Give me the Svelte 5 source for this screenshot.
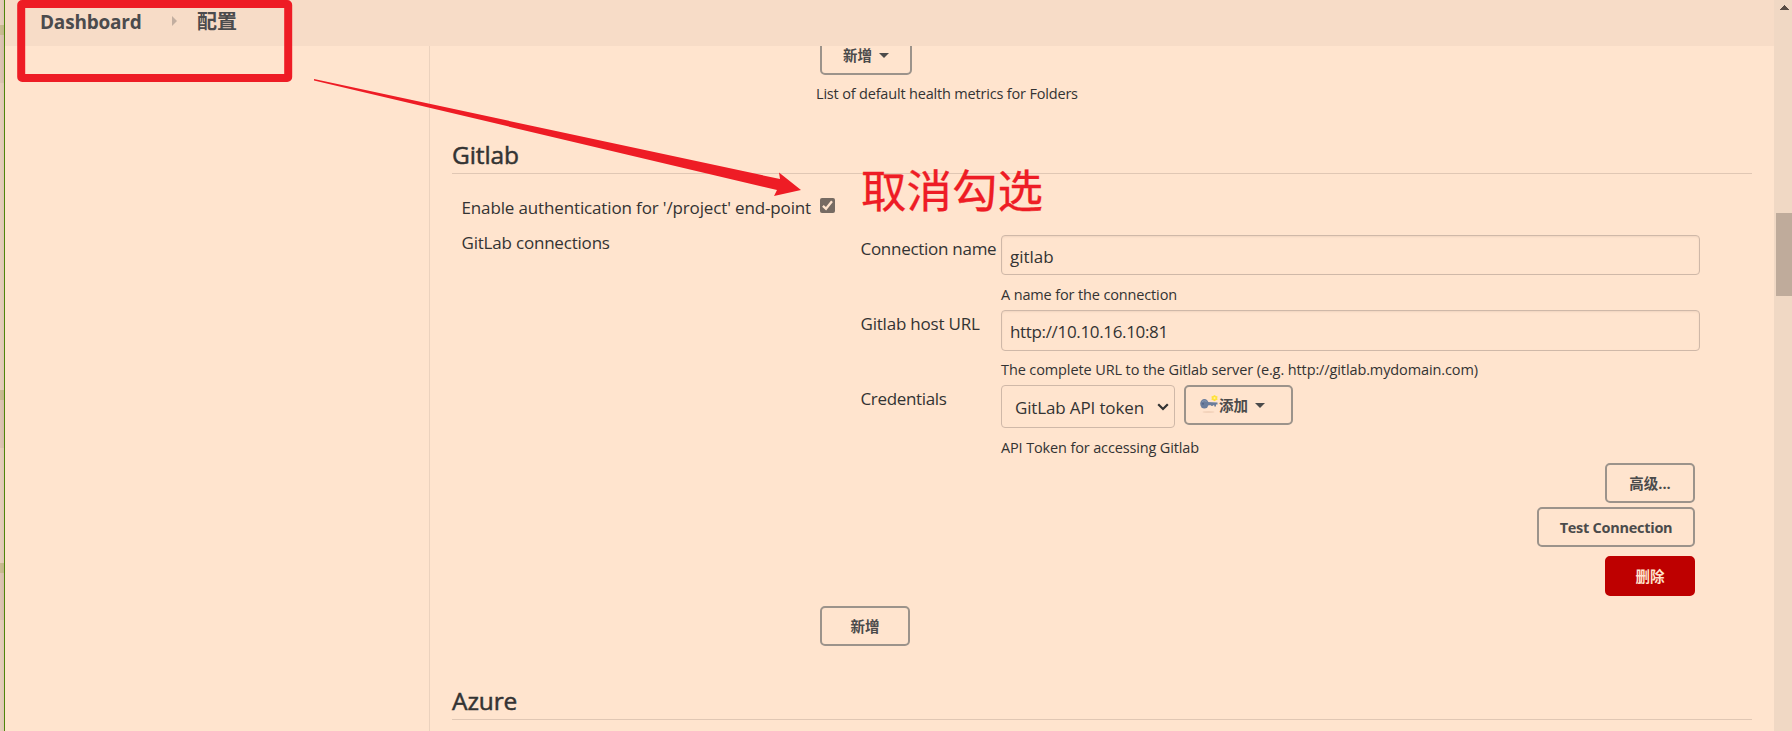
<script>
  const rail = [
    { h: 25, kind: 'plain' },
    { h: 10, kind: 'mark' },
    { h: 48, kind: 'dim' },
    { h: 307, kind: 'plain' },
    { h: 10, kind: 'mark' },
    { h: 48, kind: 'dim' },
    { h: 115, kind: 'plain' },
    { h: 10, kind: 'mark' },
    { h: 47, kind: 'dim' },
    { h: 111, kind: 'plain' }
  ];
  let enabled = $state(true);
</script>

<div class="page">
  <aside class="rail">
    {#each rail as part}
      <div class={part.kind} style="height:{part.h}px"></div>
    {/each}
  </aside>

  <div class="window">
    <header>
      <nav>
        <a class="crumb" href="#dashboard">Dashboard</a>
        <svg class="sep" width="6" height="10" viewBox="0 0 6 10"><path d="M0 0L5 5L0 10Z" /></svg>
        <a class="crumb cn" href="#config">配置</a>
      </nav>
    </header>

    <div class="body">
      <div class="side"></div>
      <main>
        <div class="metrics">
          <button class="btn add-metric">新增 <i class="caret"></i></button>
          <p class="help list">List of default health metrics for Folders</p>
        </div>

        <h2>Gitlab</h2>
        <label class="check">
          <span class="long">Enable authentication for '/project' end-point</span>
          <input type="checkbox" bind:checked={enabled} />
          <svg width="15" height="15" viewBox="0 0 15 15"><rect width="15" height="15" rx="2" /><path d="M2.9 7.8L6 10.7L12 3.3" /></svg>
        </label>

        <div class="connections">
          <span class="label group">GitLab connections</span>
          <div class="form">
            <span class="label name">Connection name</span>
            <div class="field">
              <div class="input one">gitlab</div>
              <p class="help">A name for the connection</p>
            </div>
            <span class="label">Gitlab host URL</span>
            <div class="field">
              <div class="input two">http://10.10.16.10:81</div>
              <p class="help full">The complete URL to the Gitlab server (e.g. http://gitlab.mydomain.com)</p>
            </div>
            <span class="label cred">Credentials</span>
            <div class="field">
              <div class="pick">
                <div class="select">
                  <span>GitLab API token</span>
                  <svg width="12" height="8" viewBox="0 0 12 8"><path d="M1.2 1.2L6 6L10.8 1.2" /></svg>
                </div>
                <button class="btn key">
                  <svg width="20" height="20" viewBox="0 0 20 20">
                    <ellipse cx="9.5" cy="18" rx="6" ry="1" fill="#f3d3bb" />
                    <path d="M8 8L18.5 8.4V10.6H17V12.6H15.3V11.2H13.8V12H12.2V11.2H8Z" fill="#6b7d9c" />
                    <ellipse cx="5.4" cy="9.8" rx="4.2" ry="4.8" fill="#6b7d9c" />
                    <path d="M3 7.6Q5 5.8 7.6 7.4" fill="none" stroke="#8799b5" />
                    <circle cx="4" cy="9.8" r="1" fill="#53658a" />
                    <path d="M15.5 0.9L17 2L18.6 2.6L18.2 4.2L18.6 5.8L17 6.3L15.5 7.3L14 6.3L12.4 5.8L12.8 4.2L12.4 2.6L14 2Z" fill="#ffe13b" />
                    <circle cx="15.5" cy="4.1" r="1" fill="#fff0a0" />
                  </svg>添加 <i class="caret"></i>
                </button>
              </div>
              <p class="help token">API Token for accessing Gitlab</p>
            </div>
          </div>
          <div class="actions">
            <button class="btn small">高级...</button>
            <button class="btn test">Test Connection</button>
            <button class="btn small danger">删除</button>
          </div>
          <button class="btn small append">新增</button>
        </div>

        <h2 class="azure">Azure</h2>
      </main>
    </div>
  </div>

  <div class="scroll">
    <svg width="9" height="5" viewBox="0 0 9 5"><path d="M0 5V4H1V3H2V2H3V1H4V0H5V1H6V2H7V3H8V4H9V5Z" /></svg>
    <div class="thumb"></div>
  </div>

  <svg class="marks" width="1792" height="731" viewBox="0 0 1792 731">
    <rect x="21.2" y="4" width="267" height="74" rx="1" />
    <polygon points="314,79 780,179 779,172.5 801,190 774,196 777,190 314,80.5" />
  </svg>
  <div class="note">取消勾选</div>
</div>

<style>
  :global(body) { background: #ffe4ce; overflow: hidden; }
  .page {
    position: relative; display: flex; width: 1792px; height: 731px; overflow: hidden;
    background: #ffe4ce; color: #333; font: 17px/24px "Open Sans", "Noto Sans CJK SC", sans-serif;
  }
  .rail { width: 4px; border-right: 1px solid #4f850b; flex: none; }
  .plain { background: linear-gradient(90deg, #e8cfbc, #dfc8b6); }
  .dim { background: linear-gradient(90deg, #dfc6b4, #d5bdac); }
  .mark { background: linear-gradient(90deg, #cbbd92, #c1b58a); }
  .window { width: 1769px; flex: none; }
  header { height: 46px; background: #f7dcc7; }
  nav { display: flex; padding: 10px 0 0 35px; }
  .crumb { color: #4b4b4d; text-decoration: none; font-size: 19px; font-weight: 700; letter-spacing: -0.2px; line-height: 24px; width: 132px; }
  .crumb.cn { font-size: 20px; letter-spacing: 0; width: auto; }
  .sep { fill: #c2aea0; margin: 6px 19px 0 0; }
  .body { display: flex; height: 685px; overflow: hidden; }
  .side { width: 424px; border-right: 1px solid #ebd2be; flex: none; }
  main { width: 1300px; margin-left: 22px; flex: none; }
  p, h2 { margin: 0; }
  .help { font-size: 14.5px; line-height: 20px; letter-spacing: -0.14px; color: #333; white-space: nowrap; }
  .full { letter-spacing: -0.11px; }
  .btn {
    box-sizing: border-box; height: 40px; border: 2px solid #9c938b; border-radius: 5px; background: none; padding: 1px 0 0;
    display: flex; align-items: center; justify-content: center; color: #4b4b4b;
    font: 700 14.5px/20px "Open Sans", "Noto Sans CJK SC", sans-serif; white-space: pre;
  }
  .caret { border: 5px solid transparent; border-top-color: #4b4b4b; border-bottom: 0; margin-left: 3px; }
  .metrics { display: flow-root; height: 92px; box-sizing: border-box; }
  .add-metric { width: 92px; margin: -11px 0 9px 368px; }
  .list { padding-left: 364px; letter-spacing: -0.18px; }
  h2 { font-size: 24.5px; font-weight: 400; line-height: 32px; padding: 1px 0 2px; border-bottom: 1px solid #e0c7b4; letter-spacing: -0.1px; -webkit-text-stroke: 0.5px #333; }
  .check { display: flex; height: 23px; padding: 22px 0 11px 9.5px; }
  .check input { position: absolute; opacity: 0; pointer-events: none; }
  .long { width: 358.5px; letter-spacing: -0.14px; white-space: nowrap; }
  .check svg { margin-top: 2px; fill: #766b63; }
  .check path { fill: none; stroke: #ffe4ce; stroke-width: 2.3; }
  .connections { display: flex; flex-direction: column; height: 454px; box-sizing: border-box; padding-top: 5px; }
  .label { white-space: nowrap; letter-spacing: -0.2px; }
  .group { margin: -4px 0 -20px 9.5px; }
  .form { display: grid; grid-template-columns: 140.5px 699px; grid-template-rows: 75px 75px 78px; margin-left: 408.5px; }
  .form .label { padding-top: 2px; }
  .form .name { letter-spacing: -0.28px; }
  .form .cred { letter-spacing: -0.35px; }
  .input, .select { box-sizing: border-box; border: 1px solid #cfb8a8; border-radius: 4px; padding: 9px 8px 0; }
  .input { box-shadow: inset 0 1px 2px #f0d4bf; }
  .one { height: 40px; margin-bottom: 10px; }
  .two { height: 41px; margin-bottom: 9px; letter-spacing: -0.34px; }
  .pick { display: flex; gap: 9px; margin-bottom: 10px; height: 43px; }
  .select { width: 174px; height: 43px; padding: 10px 5px 0 13px; display: flex; justify-content: space-between; letter-spacing: -0.14px; white-space: nowrap; }
  .select svg { margin-top: 7px; fill: none; stroke: #333; stroke-width: 2.2; }
  .key { width: 109px; justify-content: flex-start; padding-left: 13px; }
  .key svg { margin-top: -3px; }
  .actions { display: flex; flex-direction: column; align-items: flex-end; width: 1243px; gap: 4px; }
  .small { width: 90px; }
  .test { width: 158px; letter-spacing: -0.27px; }
  .danger { margin-top: 5px; border-color: #be0000; background: #be0000; color: #ffe4ce; }
  .append { margin: 10px 0 0 368px; }
  .scroll { width: 18px; background: #f0d8c4; flex: none; }
  .scroll svg { display: block; fill: #594d45; margin: 5px 0 0 6px; }
  .thumb { height: 83px; margin: 203px 0 0 2px; background: #bfab9b; }
  .marks { position: absolute; left: 0; top: 0; pointer-events: none; fill: #ee1c25; }
  .marks rect { fill: none; stroke: #ee1c25; stroke-width: 8; stroke-linejoin: round; }
  .note { position: absolute; left: 861px; top: 158px; color: #ee1c25; font: 45.5px/60px "Noto Sans CJK SC", sans-serif; -webkit-text-stroke: 0.3px #ee1c25; white-space: nowrap; }
</style>
